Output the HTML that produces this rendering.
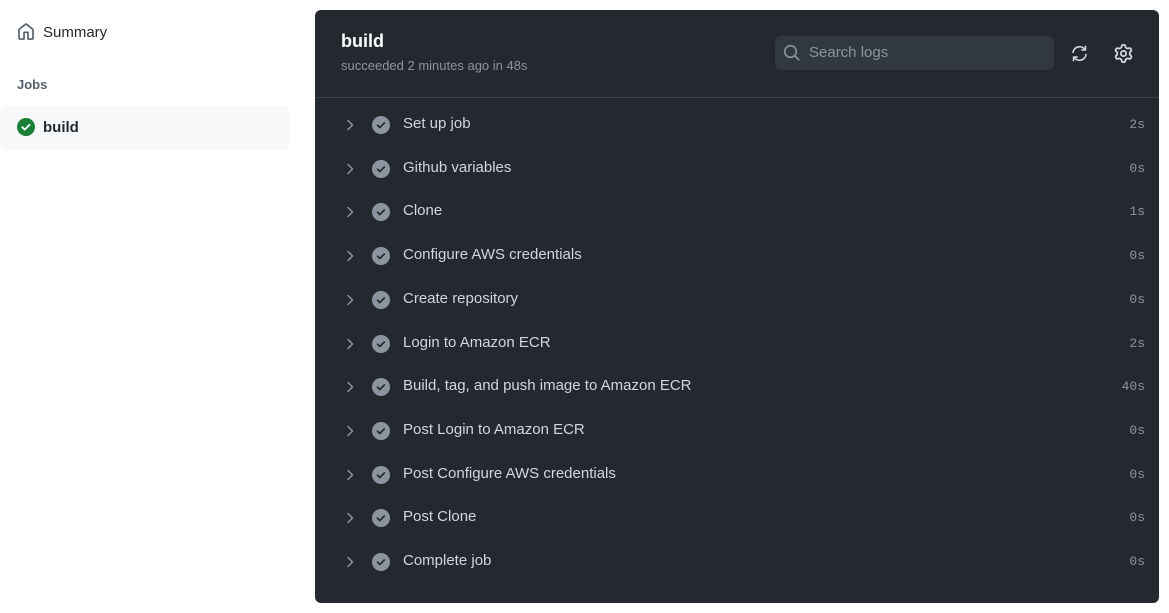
<!DOCTYPE html>
<html><head><style>
body{margin:0;width:1169px;height:613px;background:#fff;font-family:"Liberation Sans",sans-serif;position:relative;overflow:hidden}
.a{position:absolute}
.panel{left:315px;top:10px;width:844px;height:593px;background:#24292f;border-radius:6px}
.row{position:absolute;left:0;width:844px;height:44px}
.row .t{position:absolute;left:88px;top:0;line-height:44px;font-size:15px;color:#d0d7de}
.row .d{position:absolute;right:14px;top:1px;line-height:44px;font-size:13px;color:#8c959f;font-family:"Liberation Mono",monospace}
.row svg{position:absolute}
</style></head><body>
<svg class="a" style="left:17px;top:23px" width="18" height="18" viewBox="0 0 16 16"><path d="M6.906.664a1.749 1.749 0 0 1 2.187 0l5.25 4.2c.415.332.657.835.657 1.367v7.019A1.75 1.75 0 0 1 13.25 15h-3.5a.75.75 0 0 1-.75-.75V9H7v5.25a.75.75 0 0 1-.75.75h-3.5A1.75 1.75 0 0 1 1 13.25V6.23c0-.531.242-1.034.657-1.366l5.25-4.2Zm1.25 1.171a.25.25 0 0 0-.312 0l-5.25 4.2a.25.25 0 0 0-.094.196v7.019c0 .138.112.25.25.25H5.5V8.25a.75.75 0 0 1 .75-.75h3.5a.75.75 0 0 1 .75.75v5.25h2.75a.25.25 0 0 0 .25-.25V6.23a.25.25 0 0 0-.094-.195Z" fill="#57606a"/></svg>
<div class="a" style="left:43px;top:24px;font-size:15px;color:#24292f">Summary</div>
<div class="a" style="left:17px;top:77px;font-size:13px;font-weight:bold;color:#57606a">Jobs</div>
<div class="a" style="left:0;top:106px;width:289px;height:44px;background:#f6f8fa;border-radius:6px"></div>
<svg class="a" style="left:17px;top:118px" width="18" height="18" viewBox="0 0 18 18"><circle cx="9" cy="9" r="9" fill="#1a7f37"/><path d="M5.3 9.2l2.4 2.4 4.8-4.8" stroke="#fff" stroke-width="1.8" fill="none" stroke-linecap="round" stroke-linejoin="round"/></svg>
<div class="a" style="left:43px;top:119px;font-size:15px;font-weight:bold;color:#24292f">build</div>
<div class="a panel">
<div class="a" style="left:26px;top:21px;font-size:18px;font-weight:bold;color:#fff">build</div>
<div class="a" style="left:26px;top:48px;font-size:13px;color:#8c959f">succeeded 2 minutes ago in 48s</div>
<div class="a" style="left:460px;top:26px;width:279px;height:34px;background:#32383f;border-radius:6px"></div>
<svg class="a" style="left:468px;top:34px" width="18" height="18" viewBox="0 0 18 18"><circle cx="7.5" cy="7.5" r="5.8" stroke="#8c959f" stroke-width="1.6" fill="none"/><path d="M11.8 11.8l4 4" stroke="#8c959f" stroke-width="1.6" stroke-linecap="round"/></svg>
<div class="a" style="left:494px;top:34px;font-size:15px;color:#8c959f">Search logs</div>
<svg class="a" style="left:755px;top:34px" width="19" height="19" viewBox="0 0 16 16"><path d="M2.5 7.5A5.5 5.5 0 0 1 12.3 4.4M13.5 8.5A5.5 5.5 0 0 1 3.7 11.6" stroke="#d0d7de" stroke-width="1.4" fill="none"/><path d="M13 1.5v3.5H9.5M3 14.5V11h3.5" stroke="#d0d7de" stroke-width="1.4" fill="none" stroke-linejoin="round"/></svg>
<svg class="a" style="left:799px;top:34px" width="19" height="19" viewBox="0 0 16 16"><path d="M8 0a8.2 8.2 0 0 1 .701.031C9.444.095 9.99.645 10.16 1.29l.288 1.107c.018.066.079.158.212.224.231.114.454.243.668.386.123.082.233.09.299.071l1.103-.303c.644-.176 1.392.021 1.82.63.27.385.506.792.704 1.218.315.675.111 1.422-.364 1.891l-.814.806c-.049.048-.098.147-.088.294.016.257.016.515 0 .772-.01.147.038.246.088.294l.814.806c.475.469.679 1.216.364 1.891a7.977 7.977 0 0 1-.704 1.217c-.428.61-1.176.807-1.820.63l-1.102-.302c-.067-.019-.177-.011-.3.071a5.909 5.909 0 0 1-.668.386c-.133.066-.194.158-.211.224l-.29 1.106c-.168.646-.715 1.196-1.458 1.26a8.006 8.006 0 0 1-1.402 0c-.743-.064-1.289-.614-1.458-1.26l-.289-1.106c-.018-.066-.079-.158-.212-.224a5.738 5.738 0 0 1-.668-.386c-.123-.082-.233-.09-.299-.071l-1.103.303c-.644.176-1.392-.021-1.82-.63a8.12 8.12 0 0 1-.704-1.218c-.315-.675-.111-1.422.363-1.891l.815-.806c.05-.048.098-.147.088-.294a6.214 6.214 0 0 1 0-.772c.01-.147-.038-.246-.088-.294l-.815-.806C.635 6.045.431 5.298.746 4.623a7.92 7.92 0 0 1 .704-1.217c.428-.61 1.176-.807 1.820-.63l1.102.302c.067.019.177.011.3-.071.214-.143.437-.272.668-.386.133-.066.194-.158.211-.224l.29-1.106C6.009.645 6.556.095 7.299.03 7.53.01 7.764 0 8 0Zm-.571 1.525c-.036.003-.108.036-.137.146l-.289 1.105c-.147.561-.549.967-.998 1.189-.173.086-.34.183-.5.29-.417.278-.97.423-1.529.27l-1.103-.303c-.109-.03-.175.016-.195.045-.22.312-.412.644-.573.99-.014.031-.021.11.059.19l.815.806c.411.406.562.957.53 1.456a4.709 4.709 0 0 0 0 .582c.032.499-.119 1.05-.53 1.456l-.815.806c-.081.08-.073.159-.059.19.162.346.353.677.573.989.02.03.085.076.195.046l1.102-.303c.56-.153 1.113-.008 1.53.27.161.107.328.204.501.29.447.222.85.629.997 1.189l.289 1.105c.029.109.101.143.137.146a6.6 6.6 0 0 0 1.142 0c.036-.003.108-.036.137-.146l.289-1.105c.147-.561.549-.967.998-1.189.173-.086.34-.183.5-.29.417-.278.97-.423 1.529-.27l1.103.303c.109.029.175-.016.195-.045.22-.313.411-.644.573-.99.014-.031.021-.11-.059-.19l-.815-.806c-.411-.406-.562-.957-.53-1.456a4.709 4.709 0 0 0 0-.582c-.032-.499.119-1.05.53-1.456l.815-.806c.081-.08.073-.159.059-.19a6.464 6.464 0 0 0-.573-.989c-.02-.03-.085-.076-.195-.046l-1.102.303c-.56.153-1.113.008-1.53-.27a4.44 4.44 0 0 0-.501-.29c-.447-.222-.85-.629-.997-1.189l-.289-1.105c-.029-.11-.101-.143-.137-.146a6.6 6.6 0 0 0-1.142 0ZM11 8a3 3 0 1 1-6 0 3 3 0 0 1 6 0ZM9.5 8a1.5 1.5 0 1 0-3.001.001A1.5 1.5 0 0 0 9.5 8Z" fill="#d0d7de"/></svg>
<div class="a" style="left:0;top:87px;width:844px;height:1px;background:#3b4148"></div>
<div id="rows"></div>
</div>
<script>
var r=[["Set up job","2s"],["Github variables","0s"],["Clone","1s"],["Configure AWS credentials","0s"],["Create repository","0s"],["Login to Amazon ECR","2s"],["Build, tag, and push image to Amazon ECR","40s"],["Post Login to Amazon ECR","0s"],["Post Configure AWS credentials","0s"],["Post Clone","0s"],["Complete job","0s"]];
var h="";r.forEach(function(x,i){var c=92+i*43.7;
h+='<div class="row" style="top:'+c+'px"><svg style="left:29px;top:15px" width="14" height="16" viewBox="0 0 14 16"><path d="M4 3.5l4.5 4.5-4.5 4.5" stroke="#8c959f" stroke-width="1.5" fill="none" stroke-linecap="round" stroke-linejoin="round"/></svg><svg style="left:57px;top:14px" width="18" height="18" viewBox="0 0 18 18"><circle cx="9" cy="9" r="9" fill="#8c959f"/><path d="M5.5 9.2l2.3 2.3 4.5-4.5" stroke="#24292f" stroke-width="1.7" fill="none" stroke-linecap="round" stroke-linejoin="round"/></svg><div class="t">'+x[0]+'</div><div class="d">'+x[1]+'</div></div>';});
document.getElementById("rows").innerHTML=h;
</script>
</body></html>
